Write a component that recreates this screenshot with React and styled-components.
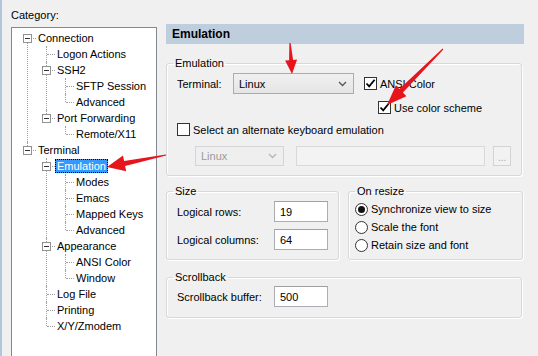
import React from 'react';
import styled, { createGlobalStyle, css } from 'styled-components';

const GlobalStyle = createGlobalStyle`
  html, body {
    margin: 0;
    padding: 0;
    background: #f0f0f0;
  }
  * {
    box-sizing: border-box;
  }
`;

const tree = [
  {
    label: 'Connection',
    children: [
      { label: 'Logon Actions' },
      { label: 'SSH2', children: [{ label: 'SFTP Session' }, { label: 'Advanced' }] },
      { label: 'Port Forwarding', children: [{ label: 'Remote/X11' }] },
    ],
  },
  {
    label: 'Terminal',
    children: [
      {
        label: 'Emulation',
        selected: true,
        children: [{ label: 'Modes' }, { label: 'Emacs' }, { label: 'Mapped Keys' }, { label: 'Advanced' }],
      },
      { label: 'Appearance', children: [{ label: 'ANSI Color' }, { label: 'Window' }] },
      { label: 'Log File' },
      { label: 'Printing' },
      { label: 'X/Y/Zmodem' },
    ],
  },
];

// builds a tapered arrow polygon from tail to tip
const arrowPoints = (tail, tip, headLen, headHalf, tailHalf, baseHalf) => {
  const dx = tip[0] - tail[0];
  const dy = tip[1] - tail[1];
  const len = Math.hypot(dx, dy);
  const ux = dx / len;
  const uy = dy / len;
  const px = -uy;
  const py = ux;
  const bx = tip[0] - ux * headLen;
  const by = tip[1] - uy * headLen;
  const pts = [
    [tail[0] + px * tailHalf, tail[1] + py * tailHalf],
    [bx + px * baseHalf, by + py * baseHalf],
    [bx + px * headHalf, by + py * headHalf],
    tip,
    [bx - px * headHalf, by - py * headHalf],
    [bx - px * baseHalf, by - py * baseHalf],
    [tail[0] - px * tailHalf, tail[1] - py * tailHalf],
  ];
  return pts.map((p) => p.map((v) => v.toFixed(1)).join(',')).join(' ');
};

const arrows = [
  { tail: [290, 43], tip: [292, 74], head: 14, half: 6, base: 2 },
  { tail: [443, 49], tip: [387, 105], head: 20, half: 7.5, base: 2.5 },
  { tail: [166, 155], tip: [107, 167], head: 18, half: 8, base: 2.5 },
];

const TreeNode = ({ node, first, last, root }) => (
  <Item $first={root && first} $last={last}>
    {node.children && <Expander />}
    <Row>
      <NodeLabel $selected={node.selected}>{node.label}</NodeLabel>
    </Row>
    {node.children && (
      <SubList>
        {node.children.map((child, i) => (
          <TreeNode key={i} node={child} first={i === 0} last={i === node.children.length - 1} />
        ))}
      </SubList>
    )}
  </Item>
);

const Check = ({ checked }) => (
  <CheckBox>
    {checked && (
      <svg width="11" height="11" viewBox="0 0 11 11">
        <path d="M1.5 5.5 L4.2 8.4 L9.6 1.8" fill="none" stroke="#000" strokeWidth="1.8" />
      </svg>
    )}
  </CheckBox>
);

const Chevron = ({ color }) => (
  <svg width="9" height="6" viewBox="0 0 9 6">
    <path d="M1 1 L4.5 4.5 L8 1" fill="none" stroke={color} strokeWidth="1.3" />
  </svg>
);

const App = () => {
  return (
    <Page>
      <GlobalStyle />
      <Sidebar>
        <Caption>Category:</Caption>
        <TreeBox>
          <RootList>
            {tree.map((node, i) => (
              <TreeNode key={i} node={node} root first={i === 0} last={i === tree.length - 1} />
            ))}
          </RootList>
        </TreeBox>
      </Sidebar>

      <Main>
        <Header>Emulation</Header>

        <Group $mt={13}>
          <Legend>Emulation</Legend>
          <Body $pad="3px 10px 9px">
            <Line>
              <FieldLabel $w={56}>Terminal:</FieldLabel>
              <Select $w={121}>
                <span>Linux</span>
                <Chevron color="#555" />
              </Select>
              <Option $ml={10}>
                <Check checked />
                <span>ANSI Color</span>
              </Option>
            </Line>
            <Line $mt={7} $ml={201}>
              <Option>
                <Check checked />
                <span>Use color scheme</span>
              </Option>
            </Line>
            <Line $mt={9}>
              <Option>
                <Check />
                <span>Select an alternate keyboard emulation</span>
              </Option>
            </Line>
            <Line $mt={10} $ml={18}>
              <Select $w={90} $h={20} disabled>
                <span>Linux</span>
                <Chevron color="#b5b5b5" />
              </Select>
              <DisabledField />
              <MoreButton>...</MoreButton>
            </Line>
          </Body>
        </Group>

        <Columns>
          <Group>
            <Legend>Size</Legend>
            <Body $pad="3px 10px 9px">
              <Line>
                <FieldLabel $w={97}>Logical rows:</FieldLabel>
                <TextField readOnly value="19" />
              </Line>
              <Line $mt={7}>
                <FieldLabel $w={97}>Logical columns:</FieldLabel>
                <TextField readOnly value="64" />
              </Line>
            </Body>
          </Group>
          <Group>
            <Legend>On resize</Legend>
            <Body $pad="2px 6px 4px">
              {['Synchronize view to size', 'Scale the font', 'Retain size and font'].map((t, i) => (
                <RadioRow key={t}>
                  <Radio $on={i === 0} />
                  <span>{t}</span>
                </RadioRow>
              ))}
            </Body>
          </Group>
        </Columns>

        <Group $mt={11}>
          <Legend>Scrollback</Legend>
          <Body $pad="2px 10px 10px">
            <Line>
              <FieldLabel $w={97}>Scrollback buffer:</FieldLabel>
              <TextField readOnly value="500" />
            </Line>
          </Body>
        </Group>
      </Main>

      <Overlay width="538" height="356" viewBox="0 0 538 356">
        {arrows.map((a, i) => (
          <polygon
            key={i}
            points={arrowPoints(a.tail, a.tip, a.head, a.half, 0.6, a.base)}
            fill="#e8141c"
          />
        ))}
      </Overlay>
    </Page>
  );
};

export default App;

const Page = styled.div`
  position: relative;
  display: flex;
  width: 538px;
  height: 356px;
  overflow: hidden;
  background: #f0f0f0;
  box-shadow: inset 2px 0 0 #b4c6dc;
  font-family: "Liberation Sans", Arial, sans-serif;
  font-size: 11px;
  color: #000;
`;

const Sidebar = styled.div`
  width: 166px;
  flex-shrink: 0;
  padding: 9px 10px 0 11px;
  display: flex;
  flex-direction: column;
`;

const Caption = styled.div`
  line-height: 13px;
  margin-bottom: 5px;
`;

const TreeBox = styled.div`
  width: 146px;
  height: 340px;
  flex-shrink: 0;
  background: #fff;
  border: 1px solid #828790;
`;

const RootList = styled.ul`
  list-style: none;
  margin: 0;
  padding: 2px 0 0 15px;
`;

const SubList = styled.ul`
  list-style: none;
  margin: 0;
  padding: 0 0 0 19px;
`;

const Item = styled.li`
  position: relative;

  &::before {
    content: '';
    position: absolute;
    left: 0;
    top: ${(p) => (p.$first ? '8px' : '0')};
    ${(p) => (p.$last ? css`height: ${p.$first ? 0 : 8}px;` : css`bottom: 0;`)}
    border-left: 1px dotted #a0a0a0;
  }

  &::after {
    content: '';
    position: absolute;
    left: 1px;
    top: 8px;
    width: 8px;
    border-top: 1px dotted #a0a0a0;
  }
`;

const Expander = styled.span`
  position: absolute;
  left: -4px;
  top: 4px;
  width: 9px;
  height: 9px;
  border: 1px solid #919191;
  background: #fff;
  z-index: 1;

  &::after {
    content: '';
    position: absolute;
    left: 1px;
    top: 3px;
    width: 5px;
    height: 1px;
    background: #333;
  }
`;

const Row = styled.div`
  height: 16px;
  display: flex;
  align-items: center;
  padding-left: 9px;
`;

const NodeLabel = styled.span`
  padding: 0 2px;
  line-height: 14px;
  height: 14px;
  white-space: nowrap;
  ${(p) =>
    p.$selected &&
    css`
      background: #3399ff;
      color: #fff;
      outline: 1px dotted #000;
      outline-offset: -1px;
    `}
`;

const Main = styled.div`
  width: 358px;
  padding-top: 24px;
  display: flex;
  flex-direction: column;
`;

const Header = styled.div`
  height: 20px;
  line-height: 20px;
  padding-left: 6px;
  background: #bfcedc;
  font-weight: bold;
  font-size: 12px;
`;

const Group = styled.fieldset`
  margin: ${(p) => p.$mt || 0}px 2px 0 0;
  padding: 0;
  min-width: 0;
  border: 1px solid #d8d8d8;
  border-radius: 3px;
  box-shadow: inset 1px 1px 0 #fff, 1px 1px 0 #fff;
`;

const Legend = styled.legend`
  margin-left: 6px;
  padding: 0 2px;
  line-height: 13px;
`;

const Body = styled.div`
  padding: ${(p) => p.$pad};
`;

const Columns = styled.div`
  display: grid;
  grid-template-columns: 173px 175px;
  gap: 9px;
  margin-top: 9px;
  margin-right: 2px;

  & > fieldset {
    margin-right: 0;
  }
`;

const Line = styled.div`
  display: flex;
  align-items: center;
  margin-top: ${(p) => p.$mt || 0}px;
  margin-left: ${(p) => p.$ml || 0}px;
`;

const FieldLabel = styled.span`
  width: ${(p) => p.$w}px;
  flex-shrink: 0;
`;

const Select = styled.div`
  width: ${(p) => p.$w}px;
  height: ${(p) => p.$h || 21}px;
  display: flex;
  align-items: center;
  justify-content: space-between;
  padding: 0 6px 0 5px;
  border: 1px solid ${(p) => (p.disabled ? '#d5d5d5' : '#acacac')};
  background: ${(p) => (p.disabled ? '#efefef' : 'linear-gradient(#f0f0f0, #e5e5e5)')};
  color: ${(p) => (p.disabled ? '#9a9a9a' : '#000')};
`;

const Option = styled.label`
  display: flex;
  align-items: center;
  gap: 3px;
  margin-left: ${(p) => p.$ml || 0}px;
`;

const CheckBox = styled.span`
  width: 13px;
  height: 13px;
  flex-shrink: 0;
  display: flex;
  align-items: center;
  justify-content: center;
  border: 1px solid #333;
  background: #fff;
`;

const DisabledField = styled.div`
  width: 190px;
  height: 20px;
  margin-left: 12px;
  border: 1px solid #d9d9d9;
  background: #f3f3f3;
`;

const MoreButton = styled.div`
  width: 18px;
  height: 20px;
  margin-left: 8px;
  border: 1px solid #d4d4d4;
  background: #f2f2f2;
  color: #a8a8a8;
  font-size: 10px;
  line-height: 22px;
  text-align: center;
`;

const TextField = styled.input`
  width: 54px;
  height: 21px;
  margin: 0;
  padding: 0 5px;
  border: 1px solid #abadb3;
  border-top-color: #a0a0a0;
  background: #fff;
  font: inherit;
  color: #000;
  outline: none;
`;

const RadioRow = styled.div`
  height: 18px;
  display: flex;
  align-items: center;
  gap: 3px;
`;

const Radio = styled.span`
  position: relative;
  width: 13px;
  height: 13px;
  flex-shrink: 0;
  border: 1px solid #333;
  border-radius: 50%;
  background: #fff;

  ${(p) =>
    p.$on &&
    css`
      &::after {
        content: '';
        position: absolute;
        left: 2px;
        top: 2px;
        width: 7px;
        height: 7px;
        border-radius: 50%;
        background: #111;
      }
    `}
`;

const Overlay = styled.svg`
  position: absolute;
  left: 0;
  top: 0;
  pointer-events: none;
`;
